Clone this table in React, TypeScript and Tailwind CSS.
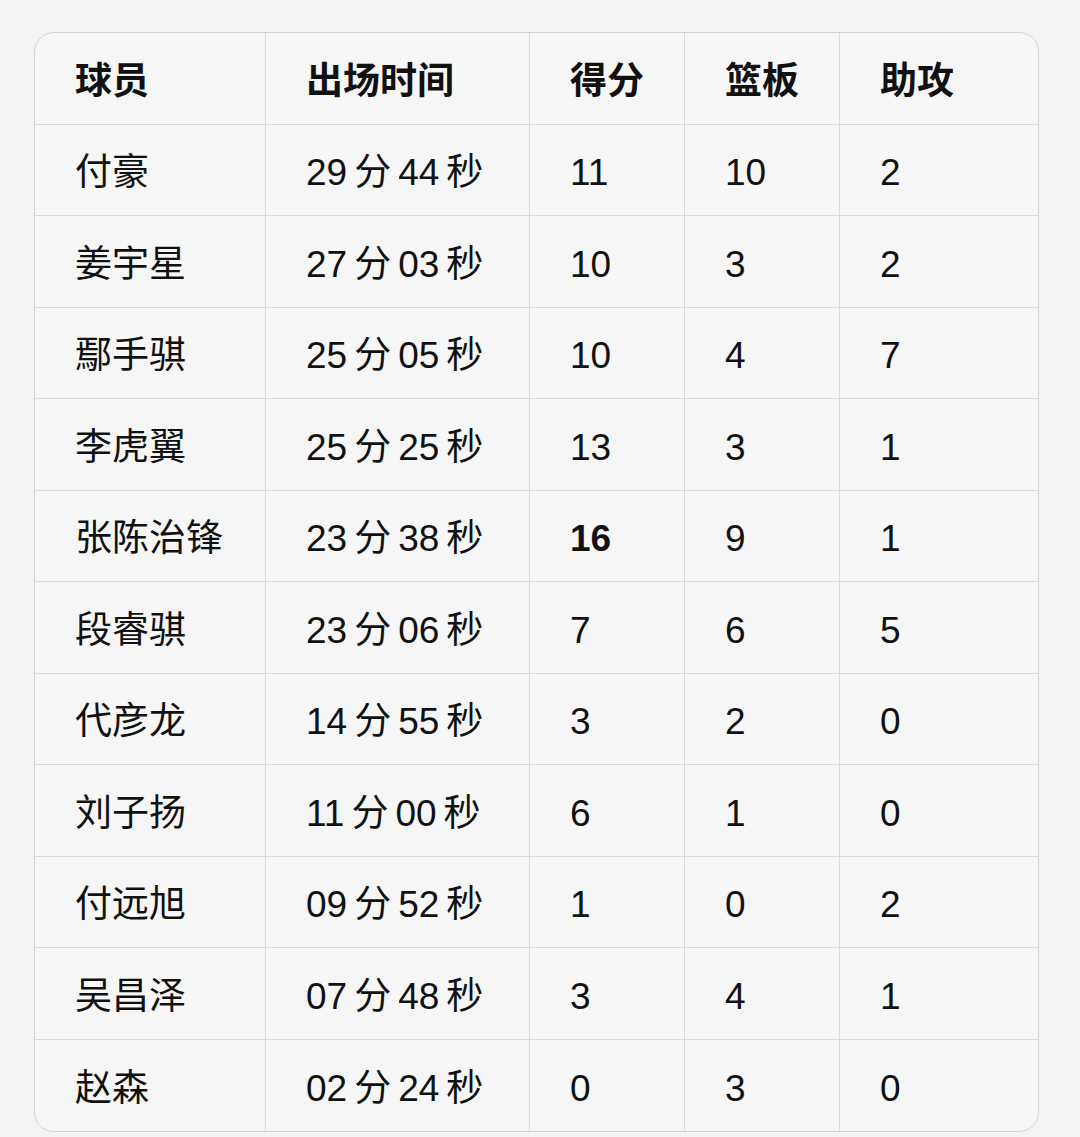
const rows = [
  ['付豪', '29', '44', '11', '10', '2'],
  ['姜宇星', '27', '03', '10', '3', '2'],
  ['鄢手骐', '25', '05', '10', '4', '7'],
  ['李虎翼', '25', '25', '13', '3', '1'],
  ['张陈治锋', '23', '38', '16', '9', '1'],
  ['段睿骐', '23', '06', '7', '6', '5'],
  ['代彦龙', '14', '55', '3', '2', '0'],
  ['刘子扬', '11', '00', '6', '1', '0'],
  ['付远旭', '09', '52', '1', '0', '2'],
  ['吴昌泽', '07', '48', '3', '4', '1'],
  ['赵森', '02', '24', '0', '3', '0'],
]

const headers = ['球员', '出场时间', '得分', '篮板', '助攻']

function Cell({ children, last, bottom, bold }: { children: React.ReactNode; last?: boolean; bottom?: boolean; bold?: boolean }) {
  return (
    <div
      className={`flex items-center pl-[40px] pt-[6px] ${last ? '' : 'border-r border-[#dadada]'} ${bottom ? '' : 'border-b border-[#dadada]'} ${bold ? 'font-bold' : 'font-normal'}`}
    >
      {children}
    </div>
  )
}

export default function App() {
  return (
    <div
      className="min-h-[1137px] bg-[#f3f3f3] pt-[32px] pl-[34px] pr-[41px] text-[37px] text-[#111111]"
      style={{ fontFamily: '"Liberation Sans", "Noto Sans CJK SC", sans-serif' }}
    >
      <div className="grid grid-cols-[231px_264px_155px_155px_1fr] auto-rows-[91.5px] overflow-hidden rounded-[20px] border border-[#d4d4d4] bg-[#f6f6f6]">
        {headers.map((h, i) => (
          <Cell key={h} last={i === 4} bold>
            {h}
          </Cell>
        ))}
        {rows.map((r, ri) => {
          const bottom = ri === rows.length - 1
          return [
            <Cell key={`${ri}-n`} bottom={bottom}>
              {r[0]}
            </Cell>,
            <Cell key={`${ri}-t`} bottom={bottom}>
              {r[1]}
              <span className="mx-[7px]">分</span>
              {r[2]}
              <span className="ml-[7px]">秒</span>
            </Cell>,
            <Cell key={`${ri}-p`} bottom={bottom} bold={r[3] === '16'}>
              {r[3]}
            </Cell>,
            <Cell key={`${ri}-r`} bottom={bottom}>
              {r[4]}
            </Cell>,
            <Cell key={`${ri}-a`} bottom={bottom} last>
              {r[5]}
            </Cell>,
          ]
        })}
      </div>
    </div>
  )
}
